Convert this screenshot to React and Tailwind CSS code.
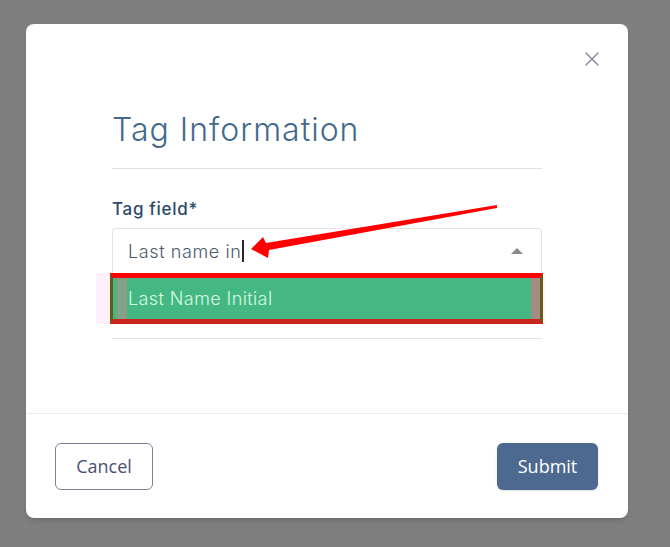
import { X } from 'lucide-react';

const Arrow = () => (
    <svg
        className="absolute left-0 top-0 pointer-events-none"
        width="670"
        height="547"
        viewBox="0 0 670 547"
    >
        <polygon
            points="251,249 263,237 266,243 497,205 497,208 269,250 268,258"
            fill="#ff0000"
        />
    </svg>
);

const App = () => {
    return (
        <div className="relative w-[670px] h-[547px] overflow-hidden bg-[#7f7f7f] pt-[24px] pl-[26px]">
            <div className="w-[602px] h-[494px] bg-white rounded-lg shadow-md flex flex-col">
                <div className="relative flex-1 border-b border-[#ececec]">
                    <button className="absolute right-[24px] top-[23px] text-[#8b8d9c]">
                        <X size={24} strokeWidth={1.5} />
                    </button>
                    <div className="ml-[86px] w-[430px] pt-[86px]">
                        <h2 className="text-[32px] leading-[40px] tracking-[1px] text-[#45698c] font-['Inter',sans-serif] font-light pb-[18px] border-b border-[#e3e3e3]">
                            Tag Information
                        </h2>
                        <label className="block mt-[29px] text-[17px] leading-[22px] tracking-[0.7px] text-[#2a4a68] font-['Inter',sans-serif] font-medium">
                            Tag field*
                        </label>
                        <div className="mt-[8px] h-[45px] border border-[#e3e3e3] border-b-0 rounded-t flex items-center pl-[15px] pr-[18px]">
                            <span className="text-[18px] tracking-[0.6px] text-[#4b5b6b] font-['Inter',sans-serif] font-light">
                                Last name in
                            </span>
                            <span className="w-[2px] h-[22px] bg-[#2b2b2b] ml-[1px]" />
                            <span className="ml-auto w-0 h-0 border-x-[6px] border-x-transparent border-b-[6px] border-b-[#8a8a8a]" />
                        </div>
                        <div className="-ml-[16px] -mr-[3px] pl-[14px] pr-[2px] bg-[#fdf0fb]">
                            <div className="h-[51px] border-y-[5px] border-t-[#ff0000] border-b-[#c8261c] border-x-[3px] border-x-[#6b5a12] flex bg-[#45b783]">
                                <div className="w-[10px] ml-[4px] bg-[#86a085]" />
                                <div className="flex-1 flex items-center pl-[1px] text-[18px] tracking-[0.4px] text-[#d4fbe4] font-['Inter',sans-serif] font-light">
                                    Last Name Initial
                                </div>
                                <div className="w-[9px] bg-[#a38c83]" />
                            </div>
                        </div>
                        <div className="mt-[14px] border-b border-[#e3e3e3]" />
                    </div>
                </div>
                <div className="h-[104px] flex items-center justify-between pl-[29px] pr-[30px]">
                    <button className="w-[98px] h-[47px] border border-[#7d8199] rounded-md text-[18px] text-[#4a5072] font-['Open_Sans',sans-serif]">
                        Cancel
                    </button>
                    <button className="w-[101px] h-[47px] bg-[#4d6990] rounded-md text-[18px] text-white font-['Open_Sans',sans-serif] shadow-sm">
                        Submit
                    </button>
                </div>
            </div>
            <Arrow />
        </div>
    );
};

export default App;
